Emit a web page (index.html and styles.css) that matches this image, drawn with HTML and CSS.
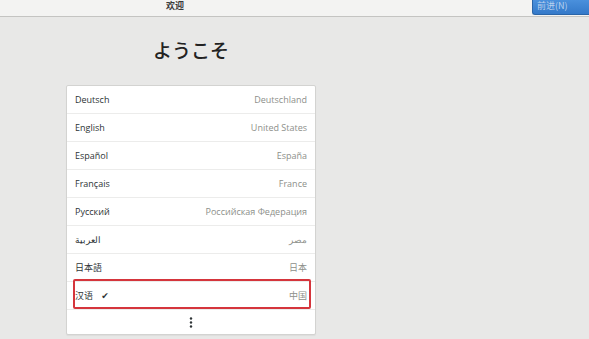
FILE: index.html
```html
<html>
    <head>
        <title>欢迎</title>
        <link rel="stylesheet" href="styles.css">
    </head>
    <body>
        <div id="header">
            <span class="title">欢迎</span>
            <span class="next">前进(N)</span>
        </div>
        <div id="main">
            <h1>ようこそ</h1>
            <div class="langs">
                <div class="row"><span class="lang">Deutsch</span><span class="region">Deutschland</span></div>
                <div class="row"><span class="lang">English</span><span class="region">United States</span></div>
                <div class="row"><span class="lang">Español</span><span class="region">España</span></div>
                <div class="row"><span class="lang">Français</span><span class="region">France</span></div>
                <div class="row"><span class="lang">Русский</span><span class="region">Российская Федерация</span></div>
                <div class="row"><span class="lang" dir="rtl">العربية</span><span class="region">مصر</span></div>
                <div class="row"><span class="lang">日本語</span><span class="region">日本</span></div>
                <div class="row selected"><span class="lang">汉语 <span class="check">✔</span></span><span class="region">中国</span></div>
                <div class="more">
                    <svg width="4" height="11" viewBox="0 0 4 11">
                        <circle cx="2" cy="1.5" r="1.2" fill="#2e3436"/>
                        <circle cx="2" cy="5.5" r="1.2" fill="#2e3436"/>
                        <circle cx="2" cy="9.5" r="1.2" fill="#2e3436"/>
                    </svg>
                </div>
            </div>
        </div>
    </body>
</html>
```

FILE: styles.css
```css
body {
    margin: 0;
    background-color: #e8e8e7;
    font-family: "Open Sans", "Noto Sans CJK SC", sans-serif;
    color: #2e3436;
    overflow: hidden;
}
#header {
    display: flex;
    align-items: flex-start;
    height: 16px;
    background-color: #f3f3f2;
    border-bottom: 1px solid #c4c4c2;
}
#header .title {
    margin-left: 166px;
    margin-top: 1px;
    font-family: "Noto Sans CJK SC", sans-serif;
    font-size: 9px;
    font-weight: bold;
    line-height: 10px;
    color: #3a3a3a;
}
#header .next {
    margin-left: auto;
    width: 52px;
    height: 14px;
    padding-left: 4px;
    background: linear-gradient(#4a90dc, #3479c9);
    border: 1px solid #2a65a8;
    border-top: none;
    border-right: none;
    border-radius: 0 0 0 3px;
    font-family: "Noto Sans CJK SC", sans-serif;
    font-size: 9px;
    line-height: 12px;
    color: #b9d1ee;
}
#main {
    width: 250px;
    margin-left: 66px;
}
h1 {
    margin: 21px 0 0 0;
    height: 47px;
    text-align: center;
    font-family: "Noto Sans CJK JP", sans-serif;
    font-size: 19px;
    font-weight: 500;
    line-height: 24px;
    color: #222;
}
.langs {
    background-color: #fff;
    border: 1px solid #d3d3d1;
    border-radius: 2px;
    box-shadow: 0 1px 1px rgba(0, 0, 0, 0.05);
}
.row {
    display: flex;
    justify-content: space-between;
    align-items: center;
    height: 27px;
    padding: 0 8px;
    border-bottom: 1px solid #ececeb;
    font-size: 9px;
}
.lang {
    color: #2e3436;
}
.region {
    color: #8d8f8a;
}
.check {
    margin-left: 6px;
    font-family: "DejaVu Sans", sans-serif;
    font-size: 9px;
    color: #2e3436;
}
.selected {
    position: relative;
}
.selected::after {
    content: "";
    position: absolute;
    left: 6px;
    right: 4px;
    top: -3px;
    bottom: 0;
    border: 2px solid #d5353c;
    border-radius: 2px;
}
.more {
    display: flex;
    justify-content: center;
    align-items: center;
    height: 24px;
}
```
